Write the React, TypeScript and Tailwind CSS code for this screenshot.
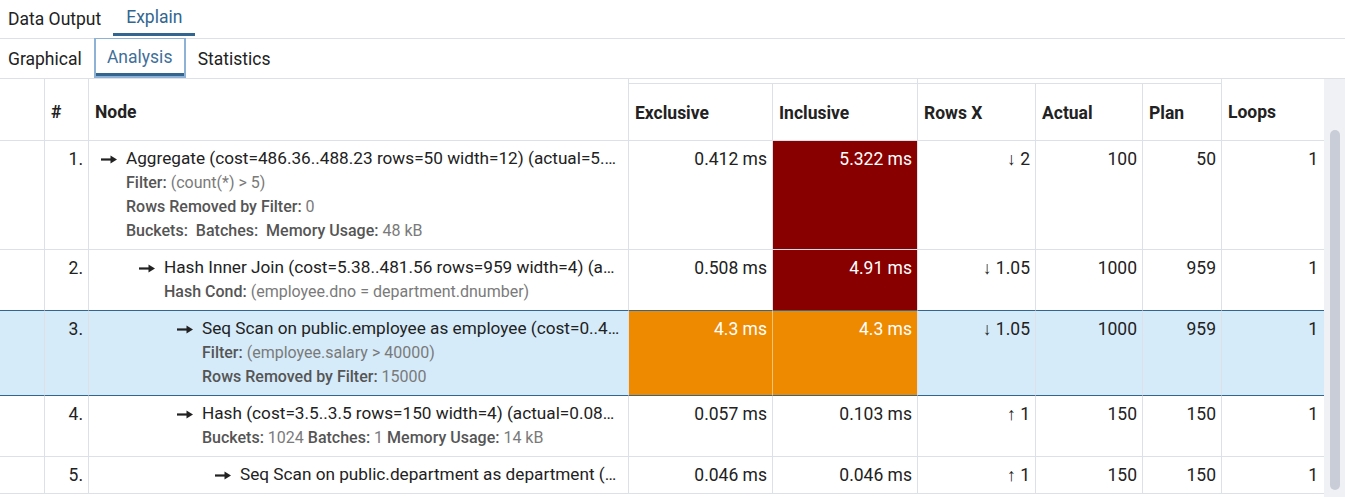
import React from 'react';

type Detail = [string, string][];

interface PlanRow {
  n: number;
  level: number;
  title: string;
  details: Detail[];
  excl: string;
  incl: string;
  exclBg?: 'orange';
  inclBg?: 'red' | 'orange';
  rowsX: string;
  actual: string;
  plan: string;
  loops: string;
}

const ROWS: PlanRow[] = [
  {
    n: 1,
    level: 0,
    title: 'Aggregate (cost=486.36..488.23 rows=50 width=12) (actual=5.301..5.322 rows=100 loops=1)',
    details: [
      [['Filter', '(count(*) > 5)']],
      [['Rows Removed by Filter', '0']],
      [['Buckets', ''], ['Batches', ''], ['Memory Usage', '48 kB']],
    ],
    excl: '0.412 ms',
    incl: '5.322 ms',
    inclBg: 'red',
    rowsX: '↓ 2',
    actual: '100',
    plan: '50',
    loops: '1',
  },
  {
    n: 2,
    level: 1,
    title: 'Hash Inner Join (cost=5.38..481.56 rows=959 width=4) (actual=0.131..4.91 rows=1000 loops=1)',
    details: [[['Hash Cond', '(employee.dno = department.dnumber)']]],
    excl: '0.508 ms',
    incl: '4.91 ms',
    inclBg: 'red',
    rowsX: '↓ 1.05',
    actual: '1000',
    plan: '959',
    loops: '1',
  },
  {
    n: 3,
    level: 2,
    title: 'Seq Scan on public.employee as employee (cost=0..470 rows=959 width=8)',
    details: [[['Filter', '(employee.salary > 40000)']], [['Rows Removed by Filter', '15000']]],
    excl: '4.3 ms',
    incl: '4.3 ms',
    exclBg: 'orange',
    inclBg: 'orange',
    rowsX: '↓ 1.05',
    actual: '1000',
    plan: '959',
    loops: '1',
  },
  {
    n: 4,
    level: 2,
    title: 'Hash (cost=3.5..3.5 rows=150 width=4) (actual=0.083..0.103 rows=150 loops=1)',
    details: [[['Buckets', '1024'], ['Batches', '1'], ['Memory Usage', '14 kB']]],
    excl: '0.057 ms',
    incl: '0.103 ms',
    rowsX: '↑ 1',
    actual: '150',
    plan: '150',
    loops: '1',
  },
  {
    n: 5,
    level: 3,
    title: 'Seq Scan on public.department as department (cost=0..3.5 rows=150 width=8)',
    details: [],
    excl: '0.046 ms',
    incl: '0.046 ms',
    rowsX: '↑ 1',
    actual: '150',
    plan: '150',
    loops: '1',
  },
];

const SELECTED = 3;

const INDENT = ['pl-[12px]', 'pl-[50px]', 'pl-[88px]', 'pl-[126px]'];

const GRID =
  'grid grid-cols-[45px_44px_540px_144px_145px_118px_107px_79px_102px]';

const Arrow = () => (
  <svg width="16" height="9" viewBox="0 0 16 9" className="shrink-0">
    <rect x="0" y="3.4" width="11" height="2.2" fill="#222" />
    <path d="M9.5 0.5 L16 4.5 L9.5 8.5 Z" fill="#222" />
  </svg>
);

const Tab = ({ label, active }: { label: string; active?: boolean }) => (
  <div
    className={
      active
        ? 'h-[36px] flex items-center pt-[2px] px-[13px] border-b-[3px] border-[#326690] text-[#326690]'
        : 'h-[36px] flex items-center pt-[2px] px-2 text-[#222]'
    }
  >
    {label}
  </div>
);

const App = () => {
  const cellBase = 'border-b border-r pt-[6px] pb-[6px]';
  const head = 'border-r border-b border-[#dde0e6] flex items-center pl-[6px] pt-[2px]';

  return (
    <div
      className="w-[1345px] h-[497px] overflow-hidden bg-white text-[#222] text-[17.5px]"
      style={{ fontFamily: 'Roboto, "Liberation Sans", sans-serif' }}
    >
      {/* outer tabs */}
      <div className="h-[39px] border-b border-[#dde0e6] flex items-start gap-1">
        <Tab label="Data Output" />
        <Tab label="Explain" active />
      </div>

      {/* explain sub tabs */}
      <div className="h-[40px] border-b border-[#dde0e6] flex items-stretch">
        <div className="flex items-center px-2 pr-3 pt-[2px]">Graphical</div>
        <div className="w-[92px] border-x-2 border-b-2 border-t border-[#8db2d6] flex flex-col -mt-px">
          <div className="flex-1 flex items-center justify-center pt-[3px] text-[#3f6f9a]">Analysis</div>
          <div className="h-[3px] bg-[#326690]"></div>
        </div>
        <div className="flex items-center px-3 pt-[2px]">Statistics</div>
      </div>

      <div className="flex">
        <div className="w-[1324px]">
          {/* header */}
          <div className={`${GRID} grid-rows-[5px_57px] font-bold`}>
            <div className="row-span-2 border-r border-b border-[#dde0e6]"></div>
            <div className={`row-span-2 ${head} pt-[5px]`}>#</div>
            <div className={`row-span-2 ${head} pt-[5px]`}>Node</div>
            <div className="col-span-2 border-r border-b border-[#dde0e6]"></div>
            <div className="col-span-3 border-r border-b border-[#dde0e6]"></div>
            <div className="row-span-2 border-b border-[#dde0e6] flex items-center pl-[6px] pt-[5px]">Loops</div>
            <div className={head}>Exclusive</div>
            <div className={head}>Inclusive</div>
            <div className={head}>Rows X</div>
            <div className={head}>Actual</div>
            <div className={head}>Plan</div>
          </div>

          {/* body */}
          {ROWS.map((r) => {
            const sel = r.n === SELECTED;
            const beforeSel = r.n === SELECTED - 1;
            const bottom = sel || beforeSel ? 'border-b-[#326690]' : 'border-b-[#dde0e6]';
            const rowBg = sel ? 'bg-[#d5ebf9]' : 'bg-white';
            const side = 'border-r-[#dde0e6]';
            const num = `${cellBase} ${bottom} ${side} ${rowBg} text-right pr-[5px] leading-6`;

            const exclCls =
              r.exclBg === 'orange'
                ? `${cellBase} ${bottom} border-r-[#f6c27a] bg-[#ee8a00] text-white text-right pr-[5px] leading-6`
                : num;
            const inclCls =
              r.inclBg === 'red'
                ? `${cellBase} ${bottom} ${side} bg-[#880000] text-white text-right pr-[5px] leading-6`
                : r.inclBg === 'orange'
                ? `${cellBase} ${bottom} ${side} bg-[#ee8a00] text-white text-right pr-[5px] leading-6`
                : num;

            return (
              <div key={r.n} className={GRID}>
                <div className={`${cellBase} ${bottom} ${side} ${rowBg}`}></div>
                <div className={num}>{r.n}.</div>
                <div className={`${cellBase} ${bottom} ${side} ${rowBg} ${INDENT[r.level]} pr-[6px] min-w-0`}>
                  <div className="flex items-center gap-[9px] h-6 min-w-0">
                    <Arrow />
                    <span className="truncate text-[17.2px]">{r.title}</span>
                  </div>
                  {r.details.map((line, i) => (
                    <div key={i} className="pl-[25px] text-[16px] leading-6 whitespace-pre">
                      {line.map(([k, v], j) => (
                        <span key={j}>
                          <span className="font-medium text-[#555]">{k}:</span>
                          <span className="text-[#7a7a7a]">{v ? ` ${v} ` : '  '}</span>
                        </span>
                      ))}
                    </div>
                  ))}
                </div>
                <div className={exclCls}>{r.excl}</div>
                <div className={inclCls}>{r.incl}</div>
                <div className={num}>{r.rowsX}</div>
                <div className={num}>{r.actual}</div>
                <div className={num}>{r.plan}</div>
                <div className={`${cellBase} ${bottom} border-r-0 ${rowBg} text-right pr-[6px] leading-6`}>{r.loops}</div>
              </div>
            );
          })}
        </div>

        {/* scrollbar */}
        <div className="w-[21px] h-[418px] bg-[#f0f1f4] pt-[51px] pl-[6px]">
          <div className="w-[10px] h-[360px] rounded-full bg-[#c8cdd8]"></div>
        </div>
      </div>
    </div>
  );
};

export default App;
